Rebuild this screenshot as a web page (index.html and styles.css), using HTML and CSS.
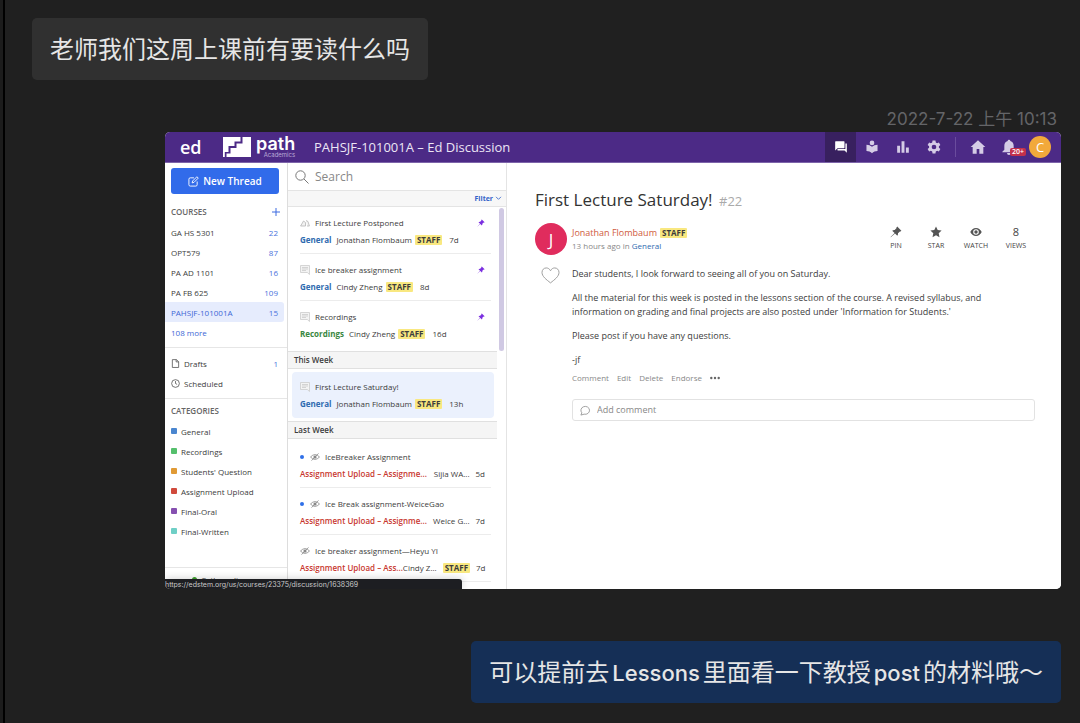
FILE: index.html
```html
<!DOCTYPE html>
<html lang="zh-CN">
<head>
<meta charset="utf-8">
<title>Chat</title>
<link rel="stylesheet" href="styles.css">
</head>
<body>
<svg class="defs" aria-hidden="true">
  <symbol id="pin" viewBox="0 0 12 12"><path d="M7.2.6 11.4 4.8 10.5 5.6 9.9 5.4 8 7.3Q8.3 8.7 7.3 9.8L5 7.4.8 11.3.6 11.1 4.6 7 2.2 4.7Q3.4 3.8 4.7 4L6.600 2.100 6.400 1.400Z"/></symbol>
  <symbol id="note" viewBox="0 0 10 10"><path d="M.5.5h9v9L7.300 7.500H.5z" fill="#f3f3f3" stroke="#ccc" stroke-width=".8"/><path d="M2 2.500h6M2 4h6M2 5.500h4" stroke="#c4c4c4" stroke-width=".7" fill="none"/></symbol>
  <symbol id="hidden" viewBox="0 0 10 8"><path d="M.5 4Q5-.8 9.500 4 5 8.800.5 4z" fill="none" stroke="#888" stroke-width=".8"/><circle cx="5" cy="4" r="1.600" fill="#888"/><path d="M8.500.4 1.500 7.600" stroke="#888" stroke-width=".8"/></symbol>
</svg>
<main class="chat">
  <p class="bubble incoming">老师我们这周上课前有要读什么吗</p>
  <time class="stamp" datetime="2022-07-22T10:13">2022-7-22 上午 10:13</time>

  <section class="window">
    <header class="topbar">
      <a class="ed" href="#">ed</a>
      <a class="brand" href="#">
        <svg class="steps" viewBox="0 0 28 20"><path d="M0 0h17.500v4.500h-6v4.500H5.500v6H1.800V20H0z"/><path d="M19.500 0H28v20H3.500v-3.500h4v-5.500h6v-4.500h6z"/></svg>
        <span class="wordmark"><span class="path">path</span><span class="academics">Academics</span></span>
      </a>
      <h1 class="course">PAHSJF-101001A – Ed Discussion</h1>
      <nav class="tools">
        <button class="tool active" aria-label="Discussion"><svg viewBox="0 0 24 24"><path d="M3 2h14a1 1 0 0 1 1 1v10a1 1 0 0 1-1 1H6l-4 4V3a1 1 0 0 1 1-1z"/><path d="M19.500 6H22v16l-4-4H7a1 1 0 0 1-1-1v-1.500h13.500z"/></svg></button>
        <button class="tool" aria-label="Lessons"><svg viewBox="0 0 24 24"><circle cx="12" cy="5" r="4"/><path d="M12 11.600C9.500 9.300 6.200 8 2.500 8v11c3.700 0 7 1.300 9.500 3.600 2.500-2.300 5.800-3.600 9.500-3.600V8c-3.700 0-7 1.300-9.500 3.600z"/></svg></button>
        <button class="tool" aria-label="Analytics"><svg viewBox="0 0 24 24"><path d="M2 10h5v12H2zM9.500 2h5v20h-5zM17 13h5v9h-5z"/></svg></button>
        <button class="tool" aria-label="Settings"><svg viewBox="0 0 24 24"><path fill-rule="evenodd" d="M9.500 1h5l.6 3.200 2.200 1.300 3.100-1.100 2.500 4.300-2.500 2.100v2.400l2.500 2.100-2.500 4.300-3.100-1.100-2.200 1.300-.6 3.200h-5l-.6-3.200-2.200-1.300-3.100 1.100-2.500-4.300 2.500-2.100v-2.400L1.100 8.700l2.500-4.300 3.100 1.100 2.200-1.300zM12 8a4 4 0 1 0 0 8 4 4 0 0 0 0-8z"/></svg></button>
        <span class="bar"></span>
        <button class="tool home" aria-label="Home"><svg viewBox="0 0 24 24"><path d="M12 2 1 12h3v10h6v-7h4v7h6V12h3z"/></svg></button>
        <button class="tool bell" aria-label="Notifications"><svg viewBox="0 0 24 24"><path d="M12 1a2 2 0 0 0-2 2C6.500 4 5 7 5 10v6l-3 3v1h20v-1l-3-3v-6c0-3-1.500-6-5-7a2 2 0 0 0-2-2zM9 21h6a3 3 0 0 1-6 0z"/></svg><span class="count">20+</span></button>
        <button class="me">C</button>
      </nav>
    </header>

    <div class="panes">
      <aside class="side">
        <button class="new"><svg viewBox="0 0 12 12"><path d="M6.500 2H2.500A1.500 1.500 0 0 0 1 3.500v6A1.500 1.500 0 0 0 2.500 11h6A1.500 1.500 0 0 0 10 9.500V6"/><path d="M4.500 7.500 5 5.500 9.700.8 11.200 2.300 6.500 7z"/></svg>New Thread</button>
        <div class="group">
          <h2 class="label">COURSES<button class="plus" aria-label="Add course"><svg viewBox="0 0 8 8"><path d="M4 0v8M0 4h8"/></svg></button></h2>
          <a class="row" href="#">GA HS 5301<span class="num">22</span></a>
          <a class="row" href="#">OPT579<span class="num">87</span></a>
          <a class="row" href="#">PA AD 1101<span class="num">16</span></a>
          <a class="row" href="#">PA FB 625<span class="num">109</span></a>
          <a class="row current" href="#">PAHSJF-101001A<span class="num">15</span></a>
          <a class="row more" href="#">108 more</a>
        </div>
        <div class="group saved">
          <a class="row" href="#"><svg class="mini" viewBox="0 0 10 10"><path d="M1.500.7h4.500L8.500 3v6.400h-7zM5.700.7v2.500h2.800"/></svg>Drafts<span class="num">1</span></a>
          <a class="row" href="#"><svg class="mini" viewBox="0 0 10 10"><circle cx="5" cy="5" r="4.300"/><path d="M5 2.300V5l1.800 1"/></svg>Scheduled</a>
        </div>
        <div class="group cats">
          <h2 class="label">CATEGORIES</h2>
          <a class="row" href="#"><i class="sq blue"></i>General</a>
          <a class="row" href="#"><i class="sq green"></i>Recordings</a>
          <a class="row" href="#"><i class="sq orange"></i>Students' Question</a>
          <a class="row" href="#"><i class="sq red"></i>Assignment Upload</a>
          <a class="row" href="#"><i class="sq purple"></i>Final-Oral</a>
          <a class="row" href="#"><i class="sq teal"></i>Final-Written</a>
        </div>
        <div class="online"><i class="dot"></i>Cathy online</div>
      </aside>

      <section class="threads">
        <label class="search"><svg viewBox="0 0 14 14"><circle cx="5.500" cy="5.500" r="4.700"/><path d="m9 9 4.500 4.500"/></svg><input type="search" placeholder="Search" aria-label="Search"></label>
        <div class="filter"><button>Filter<svg viewBox="0 0 8 6"><path d="m1 1 3 3 3-3"/></svg></button></div>
        <div class="feed">
          <span class="thumb"></span>
          <article class="item"><h3><svg viewBox="0 0 10 10"><path d="M.6 8 3.500 3 5.500 4.500V8zM6 2.500 8 3.500 9.400 8H7" fill="#f2f2f2" stroke="#b5b5b5" stroke-width=".8"/></svg>First Lecture Postponed<svg class="pin"><use href="#pin"/></svg></h3><p><b class="gen">General</b><span>Jonathan Flombaum</span><mark>STAFF</mark><span class="age">7d</span></p></article>
          <article class="item"><h3><svg><use href="#note"/></svg>Ice breaker assignment<svg class="pin"><use href="#pin"/></svg></h3><p><b class="gen">General</b><span>Cindy Zheng</span><mark>STAFF</mark><span class="age">8d</span></p></article>
          <article class="item last"><h3><svg><use href="#note"/></svg>Recordings<svg class="pin"><use href="#pin"/></svg></h3><p><b class="rec">Recordings</b><span>Cindy Zheng</span><mark>STAFF</mark><span class="age">16d</span></p></article>
          <h2 class="week">This Week</h2>
          <article class="item selected"><h3><svg><use href="#note"/></svg>First Lecture Saturday!</h3><p><b class="gen">General</b><span>Jonathan Flombaum</span><mark>STAFF</mark><span class="age">13h</span></p></article>
          <h2 class="week">Last Week</h2>
          <article class="item first"><h3><i class="unread"></i><svg><use href="#hidden"/></svg>IceBreaker Assignment</h3><p class="spread"><b class="up">Assignment Upload – Assignme...</b><span>Sijia WA...</span><span class="age">5d</span></p></article>
          <article class="item"><h3><i class="unread"></i><svg><use href="#hidden"/></svg>Ice Break assignment-WeiceGao</h3><p class="spread"><b class="up">Assignment Upload – Assignme...</b><span>Weice G...</span><span class="age">7d</span></p></article>
          <article class="item"><h3><svg><use href="#hidden"/></svg>Ice breaker assignment—Heyu YI</h3><p class="spread"><b class="up">Assignment Upload – Ass...</b><span>Cindy Z...</span><mark>STAFF</mark><span class="age">7d</span></p></article>
        </div>
      </section>

      <article class="post">
        <h2 class="title">First Lecture Saturday! <span>#22</span></h2>
        <div class="author">
          <span class="avatar">J</span>
          <div class="who"><div class="name"><a href="#">Jonathan Flombaum</a><mark>STAFF</mark></div><div class="when">13 hours ago in <a href="#">General</a></div></div>
          <div class="acts">
            <button><svg><use href="#pin"/></svg>PIN</button>
            <button><svg viewBox="0 0 12 12"><path d="m6 .5 1.700 3.600 3.900.5L8.700 7.300l.8 3.900L6 9.300l-3.500 1.900.8-3.900L.4 4.600l3.900-.5z"/></svg>STAR</button>
            <button><svg viewBox="0 0 12 12"><path fill-rule="evenodd" d="M6 2C3.300 2 1.200 3.700.3 6 1.200 8.300 3.300 10 6 10s4.800-1.700 5.700-4C10.800 3.700 8.700 2 6 2zm0 1.200a2.800 2.800 0 1 1 0 5.600 2.800 2.800 0 0 1 0-5.600z"/><circle cx="6" cy="6" r="1.700"/></svg>WATCH</button>
            <div class="views"><strong>8</strong>VIEWS</div>
          </div>
        </div>
        <div class="body">
          <button class="heart" aria-label="Like"><svg viewBox="0 0 20 18"><path d="M10 16.800C5.500 13.300 1 10 1 5.700 1 3 3 1 5.500 1 7.400 1 9 2 10 4c1-2 2.600-3 4.500-3C17 1 19 3 19 5.700c0 4.300-4.500 7.600-9 11.100z"/></svg></button>
          <div class="text">
            <p>Dear students, I look forward to seeing all of you on Saturday.</p>
            <p>All the material for this week is posted in the lessons section of the course. A revised syllabus, and information on grading and final projects are also posted under 'Information for Students.'</p>
            <p>Please post if you have any questions.</p>
            <p>-jf</p>
            <div class="links"><a href="#">Comment</a><a href="#">Edit</a><a href="#">Delete</a><a href="#">Endorse</a><button aria-label="More"><svg viewBox="0 0 10 4"><circle cx="1.300" cy="2" r="1.200"/><circle cx="5" cy="2" r="1.200"/><circle cx="8.700" cy="2" r="1.200"/></svg></button></div>
            <label class="comment"><svg viewBox="0 0 12 12"><path d="M1 11 2 8.500A4.700 4.300 0 1 1 4.500 10z"/></svg><input type="text" placeholder="Add comment" aria-label="Add comment"></label>
          </div>
        </div>
      </article>
    </div>
    <div class="status">https://edstem.org/us/courses/23375/discussion/1638369</div>
  </section>

  <p class="bubble outgoing">可以提前去<span>Lessons</span>里面看一下教授<span>post</span>的材料哦～</p>
</main>
</body>
</html>
```
FILE: styles.css
```css
* { box-sizing: border-box; }
body, h1, h2, h3, p { margin: 0; font-weight: 400; }
body {
  background: #202020;
  border-left: 3px solid #1c1c1c;
  font-family: "Open Sans", "Noto Sans CJK SC", sans-serif;
  font-size: 8px;
  color: #3c3c3c;
}
button, input { font: inherit; color: inherit; background: none; border: 0; padding: 0; margin: 0; outline: 0; }
a { color: inherit; text-decoration: none; }
svg { display: block; flex: none; }
.defs { position: absolute; width: 0; height: 0; }

.chat {
  display: flex;
  flex-direction: column;
  min-height: 100vh;
  padding: 18px 19px 20px 27px;
  border-left: 2px solid #000;
}
.bubble {
  padding: 14px 18px 12px;
  border-radius: 5px;
  font: 24px/36px "Inter", "Noto Sans CJK SC", sans-serif;
  color: #e6e6e6;
}
.incoming { align-self: flex-start; background: #303030; }
.outgoing { align-self: flex-end; background: #152f56; margin-top: 52px; }
.outgoing span { margin: 0 3px; font-size: 22px; font-weight: 500; }
.stamp {
  align-self: flex-end;
  margin: 28px 4px 2px 0;
  font: 17px/22px "Inter", "Noto Sans CJK SC", sans-serif;
  color: #646568;
}

.window {
  position: relative;
  margin-left: 133px;
  border-radius: 5px;
  overflow: hidden;
  background: #fff;
}
.topbar { display: flex; align-items: center; height: 31px; padding: 0 10px 0 15px; background: #4c2a86; border-bottom: 1px solid #7d64aa; color: #ece6f5; }
.ed { font-size: 18px; font-weight: 600; line-height: 24px; width: 43px; color: #fff; }
.brand { display: flex; align-items: center; gap: 5px; width: 91px; color: #fff; fill: #fff; }
.steps { width: 28px; height: 20px; }
.wordmark { display: flex; flex-direction: column; align-items: flex-start; }
.path { font: 600 18px/16px "Inter", sans-serif; }
.academics { font: 6px/6px "Inter", sans-serif; align-self: flex-end; color: #b9a9d6; }
.course { font-size: 13px; line-height: 20px; flex: 1; white-space: nowrap; }
.tools { display: flex; align-items: center; align-self: stretch; fill: #d5cce6; }
.tool { position: relative; display: grid; place-items: center; width: 31px; height: 30px; }
.tool svg { width: 14px; height: 14px; fill: inherit; }
.tool.active { background: #38205f; fill: #fff; }
.bar { width: 1px; height: 20px; margin: 0 6px; background: #6a4c9d; }
.home svg, .bell svg { width: 16px; height: 16px; }
.count { position: absolute; left: 17px; top: 16px; padding: 0 2px; border-radius: 2px; background: #c4314b; color: #fff; font-size: 7px; font-weight: 600; line-height: 8px; }
.me { width: 22px; height: 22px; margin-left: 5px; border-radius: 50%; background: #f2a93b; color: #fff; font-size: 13px; line-height: 22px; }

.panes { display: grid; grid-template-columns: 123px 219px 1fr; }
.side { border-right: 1px solid #ddd; padding-top: 5px; display: flex; flex-direction: column; }
.new { display: flex; align-items: center; justify-content: center; gap: 4px; margin: 0 8px 0 6px; height: 26px; border-radius: 3px; background: #316bea; color: #fff; font-size: 10px; font-weight: 600; }
.new svg { width: 11px; height: 11px; fill: none; stroke: #fff; }
.group { padding: 8px 0 5px; border-bottom: 1px solid #e6e6e6; }
.label { display: flex; align-items: center; justify-content: space-between; padding: 0 7px 0 6px; font-size: 8px; font-weight: 600; line-height: 20px; color: #666; }
.plus svg { width: 8px; height: 8px; stroke: #3d6be0; }
.row { display: flex; align-items: center; height: 20px; padding: 0 6px; margin-right: 3px; border-radius: 0 3px 3px 0; }
.num { margin-left: auto; color: #4a72dc; }
.current { background: #e6ecfd; color: #3d67d6; }
.more { color: #3d67d6; }
.saved { padding: 5px 0; }
.mini { width: 9px; height: 9px; margin-right: 4px; fill: none; stroke: #555; stroke-width: .9; }
.cats { padding: 2px 0; flex: 1; }
.sq { width: 6px; height: 6px; margin-right: 4px; border-radius: 1px; }
.blue { background: #4a86cf; } .green { background: #55bf6c; } .orange { background: #e09a35; }
.red { background: #d04a3c; } .purple { background: #8650b0; } .teal { background: #6fcfc6; }
.online { display: flex; align-items: center; gap: 4px; height: 21px; padding: 2px 0 0 27px; }
.dot { width: 5px; height: 5px; border-radius: 50%; background: #3fa32f; }

.threads { border-right: 1px solid #e4e4e4; }
.search { display: flex; align-items: center; gap: 6px; height: 27px; padding-left: 7px; font-size: 12px; }
.search svg { width: 14px; height: 14px; fill: none; stroke: #777; }
input::placeholder { color: #888; opacity: 1; }
.search input { flex: 1; min-width: 0; }
.filter { display: flex; justify-content: flex-end; height: 17px; padding-right: 4px; background: #f7f7f7; border: solid #e4e4e4; border-width: 1px 0; font-size: 7px; font-weight: 700; color: #3563c9; }
.filter button { display: flex; align-items: center; gap: 2px; }
.filter svg { width: 7px; height: 5px; fill: none; stroke: #3563c9; }
.feed { position: relative; padding: 0 9px 7px 0; }
.thumb { position: absolute; right: 2px; top: 1px; width: 5px; height: 143px; border-radius: 3px; background: #d0c9e3; }
.item { margin: 0 6px 0 12px; padding: 9px 0 6px; border-bottom: 1px solid #ececec; }
.item h3 { display: flex; align-items: center; gap: 5px; font-size: 8px; line-height: 14px; }
.item h3 svg { width: 10px; height: 10px; }
.item h3 .pin { width: 8px; height: 8px; margin-left: auto; margin-right: 6px; fill: #7b2fe0; }
.item p { display: flex; align-items: center; line-height: 14px; margin-top: 3px; white-space: nowrap; }
.item b { margin-right: 5px; font-weight: 700; }
.gen { color: #2f6bb0; } .rec { color: #3a8741; } .up { color: #c8382f; }
mark { margin-left: 3px; padding: 0 2px; border-radius: 1px; background: #f9e880; color: #3c3c3c; font-size: 8px; font-weight: 700; line-height: 10px; }
.age { margin-left: 7px; }
.spread { padding-right: 6px; }
.item .spread b { margin-right: auto; font-weight: 600; }
.spread mark, .spread .age { margin-left: 6px; }
.last { border: 0; padding-bottom: 10px; }
.week { height: 18px; padding-left: 6px; background: #f5f5f5; border: solid #e0e0e0; border-width: 1px 0; font-size: 8px; font-weight: 600; line-height: 16px; }
.selected { margin: 3px 3px 3px 4px; padding: 8px 8px 7px; border: 0; border-radius: 4px; background: #ebf1fd; }
.first { padding-top: 11px; }
.unread { width: 4px; height: 4px; margin-right: 1px; border-radius: 50%; background: #2f6fe8; }

.post { padding: 24px 26px 0 28px; background: #fff; }
.title { font-size: 17px; line-height: 26px; color: #333; }
.title span { margin-left: 2px; font-size: 13px; color: #aaa; }
.author { display: flex; align-items: center; margin-top: 9px; }
.avatar { display: grid; place-items: center; width: 32px; height: 32px; border-radius: 50%; background: #e02c5d; color: #fff; font-size: 17px; }
.who { flex: 1; margin-left: 5px; }
.name { display: flex; align-items: center; font-size: 9px; line-height: 14px; color: #cf5a3c; }
.when { line-height: 12px; color: #888; }
.when a { color: #2f6bb0; }
.acts { display: flex; font-size: 7px; color: #444; margin-right: -1px; }
.acts > * { display: flex; flex-direction: column; align-items: center; gap: 2px; width: 40px; line-height: 12px; }
.acts svg { width: 12px; height: 12px; fill: #555; }
.acts strong { font-size: 11px; font-weight: 400; }
.body { display: flex; align-items: flex-start; margin-top: 12px; }
.heart { width: 37px; padding-left: 6px; }
.heart svg { width: 19px; height: 17px; fill: none; stroke: #999; }
.text { flex: 1; font-size: 9px; line-height: 14px; }
.text p { margin-bottom: 10px; max-width: 450px; }
.links { display: flex; gap: 8px; color: #888; font-size: 8px; margin-top: -6px; }
.links svg { width: 10px; height: 4px; fill: #666; }
.comment { display: flex; align-items: center; gap: 6px; height: 22px; margin-top: 14px; padding: 0 7px; border: 1px solid #e2e2e2; border-radius: 3px; }
.comment svg { width: 11px; height: 11px; fill: none; stroke: #999; }
.comment input { flex: 1; }

.status { position: absolute; left: 0; bottom: 0; width: 297px; height: 10px; border-radius: 0 3px 0 0; background: #1d1e22; color: #c9c9c9; font: 7px/12px "Inter", sans-serif; box-shadow: 0 0 8px #0003; }
```
